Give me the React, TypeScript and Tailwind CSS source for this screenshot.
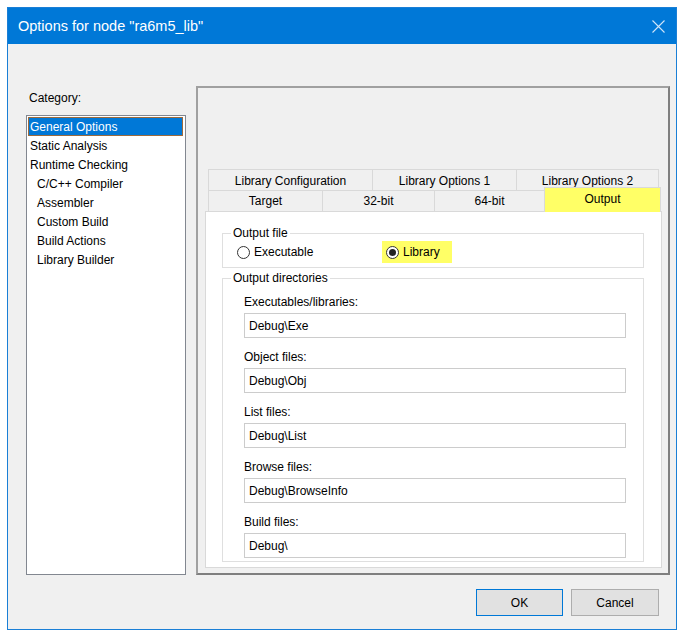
import type { ReactNode } from 'react'

// Категории слева: name + отступ (дочерние пункты сдвинуты)
const CATEGORIES: { name: string; sub?: boolean }[] = [
  { name: 'General Options' },
  { name: 'Static Analysis' },
  { name: 'Runtime Checking' },
  { name: 'C/C++ Compiler', sub: true },
  { name: 'Assembler', sub: true },
  { name: 'Custom Build', sub: true },
  { name: 'Build Actions', sub: true },
  { name: 'Library Builder', sub: true },
]

const BACK_TABS = [
  { label: 'Library Configuration', w: 'w-[164px]' },
  { label: 'Library Options 1', w: 'w-[144px]' },
  { label: 'Library Options 2', w: 'w-[143px]' },
]

const FRONT_TABS = [
  { label: 'Target', w: 'w-[114px]' },
  { label: '32-bit', w: 'w-[112px]' },
  { label: '64-bit', w: 'w-[110px]' },
]

const DIRS = [
  { label: 'Executables/libraries:', value: 'Debug\\Exe' },
  { label: 'Object files:', value: 'Debug\\Obj' },
  { label: 'List files:', value: 'Debug\\List' },
  { label: 'Browse files:', value: 'Debug\\BrowseInfo' },
  { label: 'Build files:', value: 'Debug\\' },
]

function Radio({ checked }: { checked?: boolean }) {
  return (
    <span className="flex h-[13px] w-[13px] items-center justify-center rounded-full border border-[#333333] bg-white">
      {checked && <span className="h-[7px] w-[7px] rounded-full bg-[#222222]" />}
    </span>
  )
}

function Group({ title, className, children }: { title: string; className?: string; children: ReactNode }) {
  return (
    <fieldset className={`border border-[#dfdfdf] ${className ?? ''}`}>
      <legend className="ml-[8px] px-[2px] leading-[16px]">{title}</legend>
      {children}
    </fieldset>
  )
}

export default function App() {
  return (
    <div className="h-[639px] w-[682px] bg-white pl-[7px] pt-[7px] font-['Liberation_Sans',Arial,sans-serif] text-[12px] leading-[16px] text-black">
      <div className="flex h-[623px] w-[670px] flex-col border border-[#1a7fd6] bg-[#f0f0f0]">
        {/* title bar */}
        <div className="flex h-[36px] shrink-0 items-center justify-between bg-[#0078d7] pl-[10px] pr-[11px] text-white">
          <span className="text-[14.5px] leading-[20px]">Options for node "ra6m5_lib"</span>
          <svg width="13" height="13" viewBox="0 0 13 13" className="text-[#cfe5f8]">
            <path d="M0.5 0.5 L12.5 12.5 M12.5 0.5 L0.5 12.5" stroke="currentColor" strokeWidth="1.1" />
          </svg>
        </div>

        <div className="flex flex-1 flex-col pt-[42px]">
          <div className="flex h-[489px] pl-[18px]">
            {/* category list */}
            <div className="flex w-[160px] flex-col">
              <div className="mt-[4px] pl-[3px]">Category:</div>
              <div className="mt-[9px] flex-1 border border-[#828790] bg-white p-[1px]">
                {CATEGORIES.map((c, i) => (
                  <div
                    key={c.name}
                    className={`flex h-[19px] w-[155px] items-center border ${
                      i === 0 ? 'border-[#9c6a3c] bg-[#0078d7] text-white' : 'border-transparent'
                    } ${c.sub ? 'pl-[8px]' : 'pl-[1px]'}`}
                  >
                    {c.name}
                  </div>
                ))}
              </div>
            </div>

            {/* right panel */}
            <div className="ml-[10px] flex w-[474px] flex-col border-2 border-b-[#7f7f7f] border-l-[#a0a0a0] border-r-[#7f7f7f] border-t-[#a0a0a0] pb-[5px] pl-[7px] pt-[81px]">
              <div className="flex w-[457px] flex-1 flex-col">
                <div className="flex h-[21px] pl-[3px]">
                  {BACK_TABS.map((t, i) => (
                    <div
                      key={t.label}
                      className={`${t.w} flex items-center justify-center border-l border-t border-[#d9d9d9] pt-[2px] ${
                        i === BACK_TABS.length - 1 ? 'border-r' : ''
                      }`}
                    >
                      {t.label}
                    </div>
                  ))}
                </div>
                <div className="relative z-10 -mb-px flex h-[22px] items-end pl-[3px]">
                  {FRONT_TABS.map(t => (
                    <div
                      key={t.label}
                      className={`${t.w} flex h-[22px] items-center justify-center border-l border-t border-[#d9d9d9] pb-px`}
                    >
                      {t.label}
                    </div>
                  ))}
                  <div className="-mt-[3px] flex h-[25px] w-[117px] items-center justify-center border-l border-r border-t border-[#d9d9d9] bg-[#ffff66] pb-[2px]">
                    Output
                  </div>
                </div>

                <div className="flex-1 border border-[#d9d9d9] bg-white pl-[16px] pt-[13px]">
                  <Group title="Output file" className="w-[422px] pb-[4px]">
                    <div className="flex h-[22px] items-center pl-[14px]">
                      <div className="flex w-[145px] items-center gap-[4px]">
                        <Radio />
                        <span>Executable</span>
                      </div>
                      <div className="flex h-[22px] w-[70px] items-center gap-[4px] bg-[#ffff66] pl-[4px]">
                        <Radio checked />
                        <span>Library</span>
                      </div>
                    </div>
                  </Group>

                  <Group title="Output directories" className="mt-[2px] w-[422px] pb-[3px]">
                    <div className="pl-[21px] pt-[8px]">
                      {DIRS.map((d, i) => (
                        <div key={d.label} className={i > 0 ? 'mt-[11px]' : ''}>
                          <div className="h-[16px]">{d.label}</div>
                          <input
                            readOnly
                            value={d.value}
                            className="mt-[3px] h-[25px] w-[382px] border border-[#cccccc] bg-white px-[4px] outline-none"
                          />
                        </div>
                      ))}
                    </div>
                  </Group>
                </div>
              </div>
            </div>
          </div>

          {/* buttons */}
          <div className="mt-[14px] flex justify-end gap-[8px] pr-[17px]">
            <button className="h-[27px] w-[87px] border border-[#0078d7] bg-[#e1e1e1]">OK</button>
            <button className="h-[27px] w-[88px] border border-[#adadad] bg-[#e1e1e1]">Cancel</button>
          </div>
        </div>
      </div>
    </div>
  )
}
